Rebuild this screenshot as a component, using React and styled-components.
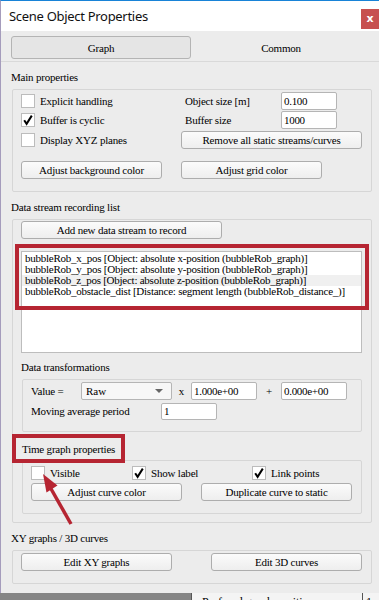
import React from 'react';
import styled, { createGlobalStyle } from 'styled-components';

const SERIF = '"Liberation Serif", "Times New Roman", serif';

const GlobalStyle = createGlobalStyle`
  html, body { margin: 0; padding: 0; background: #7d7d7d; }
  body { font-family: ${SERIF}; }
  * { box-sizing: border-box; }
`;

const Screen = styled.div`
  position: relative;
  width: 379px;
  height: 600px;
  overflow: hidden;
  display: flex;
  flex-direction: column;
  background: #7d7d7d;
`;

const Win = styled.div`
  height: 593px;
  flex: none;
  background: #ececec;
  border-top: 1px solid #1883d7;
  border-left: 1px solid #a59cbc;
  display: flex;
  flex-direction: column;
`;

const TitleBar = styled.div`
  height: 30px;
  background: #fff;
  display: flex;
  align-items: center;
  justify-content: space-between;
  padding-left: 8px;
`;

const Title = styled.div`
  font-family: "Noto Sans", "Open Sans", sans-serif;
  font-size: 13px;
  letter-spacing: -0.3px;
  color: #111;
`;

const CloseBtn = styled.div`
  width: 18px;
  height: 20px;
  margin-top: 6px;
  background: #c75050;
  color: #fff;
  font-family: "DejaVu Sans", sans-serif;
  font-weight: bold;
  font-size: 11px;
  display: flex;
  align-items: center;
  justify-content: center;
  padding-bottom: 2px;
`;

const TabBar = styled.div`
  height: 31px;
  padding: 5px 8px 0 10px;
  border-bottom: 1px solid #d9d9d9;
  display: flex;
`;

const Tab = styled.div`
  width: 180px;
  height: 23px;
  display: flex;
  align-items: center;
  justify-content: center;
  font-size: 11px;
  letter-spacing: -0.2px;
  border-radius: 3px;
  border: 1px solid ${p => (p.$active ? '#b4b4b4' : 'transparent')};
  background: ${p => (p.$active ? '#e5e5e5' : 'transparent')};
`;

const Content = styled.div`
  display: flex;
  flex-direction: column;
  padding-left: 10px;
`;

const Label = styled.div`
  height: 12px;
  line-height: 12px;
  font-size: 11px;
  letter-spacing: -0.2px;
  color: #000;
  white-space: nowrap;
  margin-top: ${p => p.$mt || 0}px;
  margin-left: ${p => p.$ml || 0}px;
`;

const Group = styled.div`
  width: ${p => p.$w}px;
  margin-top: ${p => p.$mt || 0}px;
  margin-left: ${p => p.$ml || 0}px;
  border: 1px solid #d6d6d6;
  border-radius: 2px;
  padding: ${p => p.$pt}px 0 ${p => p.$pb}px ${p => p.$pl}px;
  display: flex;
  flex-direction: column;
  align-items: flex-start;
`;

const Row = styled.div`
  display: flex;
  align-items: center;
  height: ${p => p.$h || 18}px;
  margin-top: ${p => p.$mt || 0}px;
`;

const Cell = styled.div`
  width: ${p => p.$w}px;
  flex: none;
  display: flex;
  align-items: center;
  justify-content: ${p => (p.$center ? 'center' : 'flex-start')};
  gap: 5px;
  font-size: 11px;
  letter-spacing: -0.2px;
  white-space: nowrap;
  padding-left: ${p => p.$pl || 0}px;
`;

const Box = styled.div`
  width: 14px;
  height: 14px;
  flex: none;
  background: #fff;
  border: 1px solid #bcbcbc;
  display: flex;
  align-items: center;
  justify-content: center;
`;

const Btn = styled.div`
  width: ${p => p.$w}px;
  height: 18px;
  flex: none;
  margin-left: ${p => p.$ml || 0}px;
  border: 1px solid #adadad;
  border-radius: 3px;
  background: linear-gradient(#fbfbfb, #eeeeee);
  display: flex;
  align-items: center;
  justify-content: center;
  font-size: 11px;
  letter-spacing: -0.2px;
  white-space: nowrap;
  color: #000;
`;

const Field = styled.div`
  width: ${p => p.$w}px;
  height: ${p => p.$h || 18}px;
  flex: none;
  background: #fff;
  border: 1px solid #b5b5b5;
  border-radius: 2px;
  padding-left: 2px;
  display: flex;
  align-items: center;
  font-size: 11px;
  letter-spacing: -0.3px;
  color: #000;
`;

const Combo = styled.div`
  width: ${p => p.$w}px;
  height: 18px;
  flex: none;
  background: #f7f7f7;
  border: 1px solid #b5b5b5;
  border-radius: 2px;
  padding: 0 8px 0 4px;
  display: flex;
  align-items: center;
  justify-content: space-between;
  font-size: 11px;
`;

const Arrow = styled.span`
  width: 0;
  height: 0;
  border-left: 4px solid transparent;
  border-right: 4px solid transparent;
  border-top: 4px solid #666;
`;

const List = styled.div`
  width: 341px;
  height: 102px;
  margin-top: 12px;
  background: #fff;
  border: 1px solid #bdbdbd;
  padding-top: 1px;
  display: flex;
  flex-direction: column;
`;

const ListItem = styled.div`
  height: 11px;
  line-height: 11px;
  font-size: 11px;
  letter-spacing: -0.25px;
  padding-left: 3px;
  white-space: nowrap;
  background: ${p => (p.$sel ? '#f0f0f0' : 'transparent')};
`;

const Behind = styled.div`
  height: 7px;
  display: flex;
  overflow: hidden;
`;

const BehindPane = styled.div`
  width: ${p => p.$w}px;
  flex: none;
  background: ${p => p.$bg};
  border-left: ${p => (p.$edge ? '1px solid #555' : 'none')};
  padding-left: ${p => p.$pl || 0}px;
  font-size: 12px;
  line-height: 14px;
  white-space: nowrap;
  color: #000;
  padding-top: 2px;
`;

const Annot = styled.div`
  position: absolute;
  left: ${p => p.$x}px;
  top: ${p => p.$y}px;
  width: ${p => p.$w}px;
  height: ${p => p.$h}px;
  border: 4px solid #b62532;
  pointer-events: none;
`;

const ArrowSvg = styled.svg`
  position: absolute;
  left: 0;
  top: 0;
  pointer-events: none;
`;

const Check = () => (
  <svg width="12" height="12" viewBox="0 0 12 12">
    <path d="M2.2 6.2 L4.6 9.8 L9.8 1.6" fill="none" stroke="#000" strokeWidth="2" strokeLinejoin="miter" />
  </svg>
);

const CheckBox = ({ checked }) => <Box>{checked && <Check />}</Box>;

export default function App() {
  return (
    <Screen>
      <GlobalStyle />
      <Win>
        <TitleBar>
          <Title>Scene Object Properties</Title>
          <CloseBtn>x</CloseBtn>
        </TitleBar>
        <TabBar>
          <Tab $active>Graph</Tab>
          <Tab>Common</Tab>
        </TabBar>
        <Content>
          <Label $mt={9}>Main properties</Label>
          <Group $w={360} $mt={6} $ml={1} $pt={2} $pb={12} $pl={8}>
            <Row>
              <Cell $w={160}><CheckBox />Explicit handling</Cell>
              <Cell $w={100} $pl={4}>Object size [m]</Cell>
              <Field $w={56}>0.100</Field>
            </Row>
            <Row $mt={1}>
              <Cell $w={160}><CheckBox checked />Buffer is cyclic</Cell>
              <Cell $w={100} $pl={4}>Buffer size</Cell>
              <Field $w={56}>1000</Field>
            </Row>
            <Row $mt={2}>
              <Cell $w={160}><CheckBox />Display XYZ planes</Cell>
              <Btn $w={181}>Remove all static streams/curves</Btn>
            </Row>
            <Row $mt={12}>
              <Btn $w={141}>Adjust background color</Btn>
              <Btn $w={141} $ml={19}>Adjust grid color</Btn>
            </Row>
          </Group>

          <Label $mt={9}>Data stream recording list</Label>
          <Group $w={360} $mt={6} $ml={1} $pt={1} $pb={8} $pl={8}>
            <Btn $w={201}>Add new data stream to record</Btn>
            <List>
              <ListItem>bubbleRob_x_pos [Object: absolute x-position (bubbleRob_graph)]</ListItem>
              <ListItem>bubbleRob_y_pos [Object: absolute y-position (bubbleRob_graph)]</ListItem>
              <ListItem $sel>bubbleRob_z_pos [Object: absolute z-position (bubbleRob_graph)]</ListItem>
              <ListItem>bubbleRob_obstacle_dist [Distance: segment length (bubbleRob_distance_)]</ListItem>
            </List>
            <Label $mt={8}>Data transformations</Label>
            <Group $w={340} $mt={6} $ml={1} $pt={2} $pb={11} $pl={8}>
              <Row>
                <Cell $w={50}>Value =</Cell>
                <Combo $w={91}><span>Raw</span><Arrow /></Combo>
                <Cell $w={19} $center>x</Cell>
                <Field $w={66}>1.000e+00</Field>
                <Cell $w={24} $center>+</Cell>
                <Field $w={66}>0.000e+00</Field>
              </Row>
              <Row $mt={2} $h={18}>
                <Cell $w={130}>Moving average period</Cell>
                <Field $w={56} $h={17}>1</Field>
              </Row>
            </Group>
            <Label $mt={11} $ml={1}>Time graph properties</Label>
            <Group $w={340} $mt={5} $ml={1} $pt={5} $pb={12} $pl={8}>
              <Row $h={14}>
                <Cell $w={101}><CheckBox />Visible</Cell>
                <Cell $w={120}><CheckBox checked />Show label</Cell>
                <Cell $w={100}><CheckBox checked />Link points</Cell>
              </Row>
              <Row $mt={3}>
                <Btn $w={151}>Adjust curve color</Btn>
                <Btn $w={151} $ml={19}>Duplicate curve to static</Btn>
              </Row>
            </Group>
          </Group>

          <Label $mt={9}>XY graphs / 3D curves</Label>
          <Group $w={360} $mt={6} $ml={1} $pt={2} $pb={12} $pl={8}>
            <Row>
              <Btn $w={151}>Edit XY graphs</Btn>
              <Btn $w={151} $ml={39}>Edit 3D curves</Btn>
            </Row>
          </Group>
        </Content>
      </Win>
      <Behind>
        <BehindPane $w={191} $bg="#858585" />
        <BehindPane $w={171} $bg="#f4f4f4" $edge $pl={10}>Prefered graph position</BehindPane>
        <BehindPane $w={17} $bg="#f4f4f4" $edge $pl={3}>1</BehindPane>
      </Behind>

      <Annot $x={15} $y={244} $w={354} $h={66} />
      <Annot $x={12} $y={434} $w={113} $h={29} />
      <ArrowSvg width="379" height="600">
        <line x1="71" y1="524" x2="50" y2="487" stroke="#b62532" strokeWidth="3.5" />
        <polygon points="43,474 57.5,485.5 46.5,492.5" fill="#b62532" />
      </ArrowSvg>
    </Screen>
  );
}
